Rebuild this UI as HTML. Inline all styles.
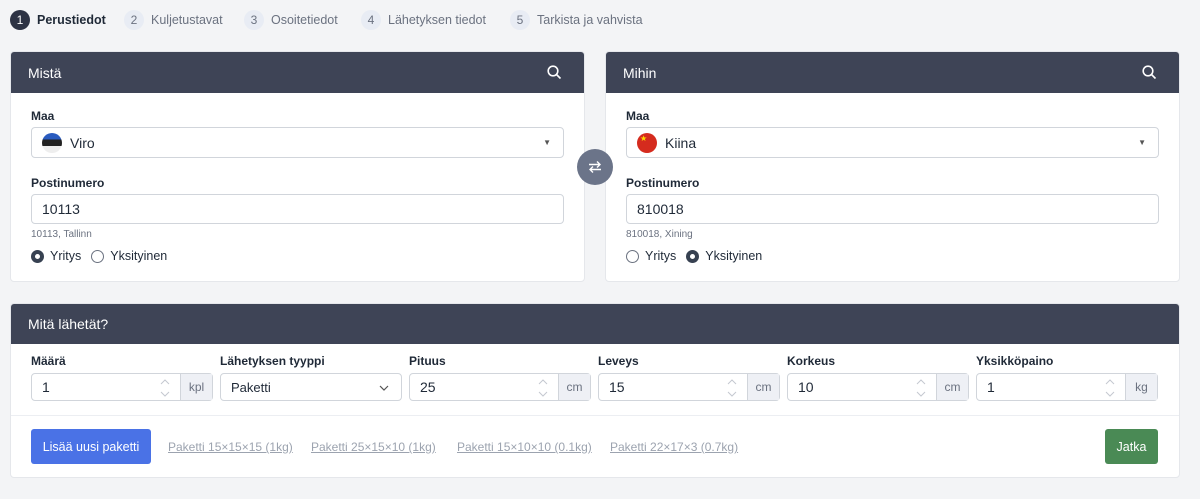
<!DOCTYPE html>
<html><head><meta charset="utf-8"><style>
*{box-sizing:border-box;margin:0;padding:0}
body{width:1200px;height:499px;background:#f3f4f6;font-family:"Liberation Sans",sans-serif;color:#1f2937;position:relative;overflow:hidden;font-size:13px}
.abs{position:absolute}
.step{position:absolute;top:10px;height:20px;display:flex;align-items:center;font-size:12.5px;color:#6b7280}
.step .n{width:20px;height:20px;border-radius:50%;background:#e8ecf4;color:#6b7280;display:inline-flex;align-items:center;justify-content:center;font-size:12px;margin-right:7px}
.card{position:absolute;background:#fff;border:1px solid #e5e7eb;border-radius:4px;overflow:hidden}
.hd{height:41px;background:#3e4456;color:#fff;font-size:14px;padding:0 0 0 17px;display:flex;align-items:center;position:relative}
.lbl{position:absolute;font-size:12px;font-weight:bold;color:#1f2937}
.inp{position:absolute;border:1px solid #d1d5db;border-radius:4px;background:#fff;height:30px;display:flex;align-items:center;padding-left:10px;font-size:14px}
.hint{position:absolute;font-size:10px;color:#6b7280}
.radio{position:absolute;display:flex;align-items:center;font-size:12.5px}
.r{width:13px;height:13px;border-radius:50%;border:1px solid #6b7280;margin-right:6px;display:inline-block;position:relative}
.r.on{border:4px solid #374151}
.unit{position:absolute;right:0;top:0;bottom:0;width:32px;background:#eef0f5;border-left:1px solid #d1d5db;color:#6b7280;display:flex;align-items:center;justify-content:center;font-size:12px}
.spin{position:absolute;top:3px;width:10px}
.lnk{position:absolute;top:440px;font-size:12px;color:#9ca3af;text-decoration:underline}
</style></head><body>
<div class="step" style="left:10px;color:#1f2937;font-weight:bold"><span class="n" style="background:#2d3344;color:#fff;font-weight:normal">1</span>Perustiedot</div>
<div class="step" style="left:124px"><span class="n">2</span>Kuljetustavat</div>
<div class="step" style="left:244px"><span class="n">3</span>Osoitetiedot</div>
<div class="step" style="left:361px"><span class="n">4</span>Lähetyksen tiedot</div>
<div class="step" style="left:510px"><span class="n">5</span>Tarkista ja vahvista</div>

<div class="card" style="left:10px;top:51px;width:575px;height:231px">
<div class="hd">Mistä<svg class="abs" style="right:22px;top:13px" width="15" height="15" viewBox="0 0 15 15"><circle cx="6" cy="6" r="4.8" fill="none" stroke="#fff" stroke-width="1.6"/><path d="M9.5 9.5L13.5 13.5" stroke="#fff" stroke-width="1.6"/></svg></div>
</div>
<div class="lbl" style="left:31px;top:109px">Maa</div>
<div class="inp" style="left:31px;top:127px;width:533px;height:31px"><span style="width:20px;height:20px;border-radius:50%;background:linear-gradient(#2a5bbf 0 33%,#222 33% 66%,#eee 66%);display:inline-block;margin-right:8px"></span>Viro<span class="abs" style="right:12px;top:10px;font-size:8px;color:#555">▼</span></div>
<div class="lbl" style="left:31px;top:176px">Postinumero</div>
<div class="inp" style="left:31px;top:194px;width:533px">10113</div>
<div class="hint" style="left:31px;top:229px">10113, Tallinn</div>
<div class="radio" style="left:31px;top:249px"><span class="r on"></span>Yritys<span class="r" style="margin-left:10px"></span>Yksityinen</div>

<div class="card" style="left:605px;top:51px;width:575px;height:231px">
<div class="hd">Mihin<svg class="abs" style="right:22px;top:13px" width="15" height="15" viewBox="0 0 15 15"><circle cx="6" cy="6" r="4.8" fill="none" stroke="#fff" stroke-width="1.6"/><path d="M9.5 9.5L13.5 13.5" stroke="#fff" stroke-width="1.6"/></svg></div>
</div>
<div class="lbl" style="left:626px;top:109px">Maa</div>
<div class="inp" style="left:626px;top:127px;width:533px;height:31px"><span style="width:20px;height:20px;border-radius:50%;background:#d52b1e;display:inline-block;margin-right:8px;color:#ffde00;font-size:8px;line-height:12px;padding-left:3px">★</span>Kiina<span class="abs" style="right:12px;top:10px;font-size:8px;color:#555">▼</span></div>
<div class="lbl" style="left:626px;top:176px">Postinumero</div>
<div class="inp" style="left:626px;top:194px;width:533px">810018</div>
<div class="hint" style="left:626px;top:229px">810018, Xining</div>
<div class="radio" style="left:626px;top:249px"><span class="r"></span>Yritys<span class="r on" style="margin-left:10px"></span>Yksityinen</div>

<div class="abs" style="z-index:5;left:577px;top:149px;width:36px;height:36px;border-radius:50%;background:#6b7489;display:flex;align-items:center;justify-content:center"><svg width="14" height="14" viewBox="0 0 14 14" fill="none" stroke="#fff" stroke-width="1.4"><path d="M1 4.5h11M9 1.5l3 3-3 3M13 9.5H2M5 6.5l-3 3 3 3"/></svg></div>

<div class="card" style="left:10px;top:303px;width:1170px;height:175px">
<div class="hd" style="height:40px">Mitä lähetät?</div>
<div class="abs" style="left:0;right:0;top:111px;height:1px;background:#eceef2"></div>
</div>

<div class="lbl" style="left:31px;top:354px">Määrä</div>
<div class="inp" style="left:31px;top:373px;width:182px;height:28px">1<svg class="spin" style="right:42px" width="10" height="22" viewBox="0 0 10 22" fill="none" stroke="#c4c8d0"><path d="M1 7l4-4 4 4M1 15l4 4 4-4"/></svg><span class="unit">kpl</span></div>
<div class="lbl" style="left:220px;top:354px">Lähetyksen tyyppi</div>
<div class="inp" style="left:220px;top:373px;width:182px;height:28px;font-size:13px">Paketti<svg class="abs" style="right:12px;top:11px" width="10" height="6" viewBox="0 0 10 6"><path d="M1 1l4 4 4-4" fill="none" stroke="#555" stroke-width="1.2"/></svg></div>
<div class="lbl" style="left:409px;top:354px">Pituus</div>
<div class="inp" style="left:409px;top:373px;width:182px;height:28px">25<svg class="spin" style="right:42px" width="10" height="22" viewBox="0 0 10 22" fill="none" stroke="#c4c8d0"><path d="M1 7l4-4 4 4M1 15l4 4 4-4"/></svg><span class="unit">cm</span></div>
<div class="lbl" style="left:598px;top:354px">Leveys</div>
<div class="inp" style="left:598px;top:373px;width:182px;height:28px">15<svg class="spin" style="right:42px" width="10" height="22" viewBox="0 0 10 22" fill="none" stroke="#c4c8d0"><path d="M1 7l4-4 4 4M1 15l4 4 4-4"/></svg><span class="unit">cm</span></div>
<div class="lbl" style="left:787px;top:354px">Korkeus</div>
<div class="inp" style="left:787px;top:373px;width:182px;height:28px">10<svg class="spin" style="right:42px" width="10" height="22" viewBox="0 0 10 22" fill="none" stroke="#c4c8d0"><path d="M1 7l4-4 4 4M1 15l4 4 4-4"/></svg><span class="unit">cm</span></div>
<div class="lbl" style="left:976px;top:354px">Yksikköpaino</div>
<div class="inp" style="left:976px;top:373px;width:182px;height:28px">1<svg class="spin" style="right:42px" width="10" height="22" viewBox="0 0 10 22" fill="none" stroke="#c4c8d0"><path d="M1 7l4-4 4 4M1 15l4 4 4-4"/></svg><span class="unit">kg</span></div>

<div class="abs" style="left:31px;top:429px;width:120px;height:35px;background:#4a72e6;border-radius:3px;color:#fff;font-size:12.5px;display:flex;align-items:center;justify-content:center">Lisää uusi paketti</div>
<div class="lnk" style="left:168px">Paketti 15×15×15 (1kg)</div>
<div class="lnk" style="left:311px">Paketti 25×15×10 (1kg)</div>
<div class="lnk" style="left:457px">Paketti 15×10×10 (0.1kg)</div>
<div class="lnk" style="left:610px">Paketti 22×17×3 (0.7kg)</div>
<div class="abs" style="left:1105px;top:429px;width:53px;height:35px;background:#4a8a55;border-radius:3px;color:#fff;font-size:12.5px;display:flex;align-items:center;justify-content:center">Jatka</div>
</body></html>
